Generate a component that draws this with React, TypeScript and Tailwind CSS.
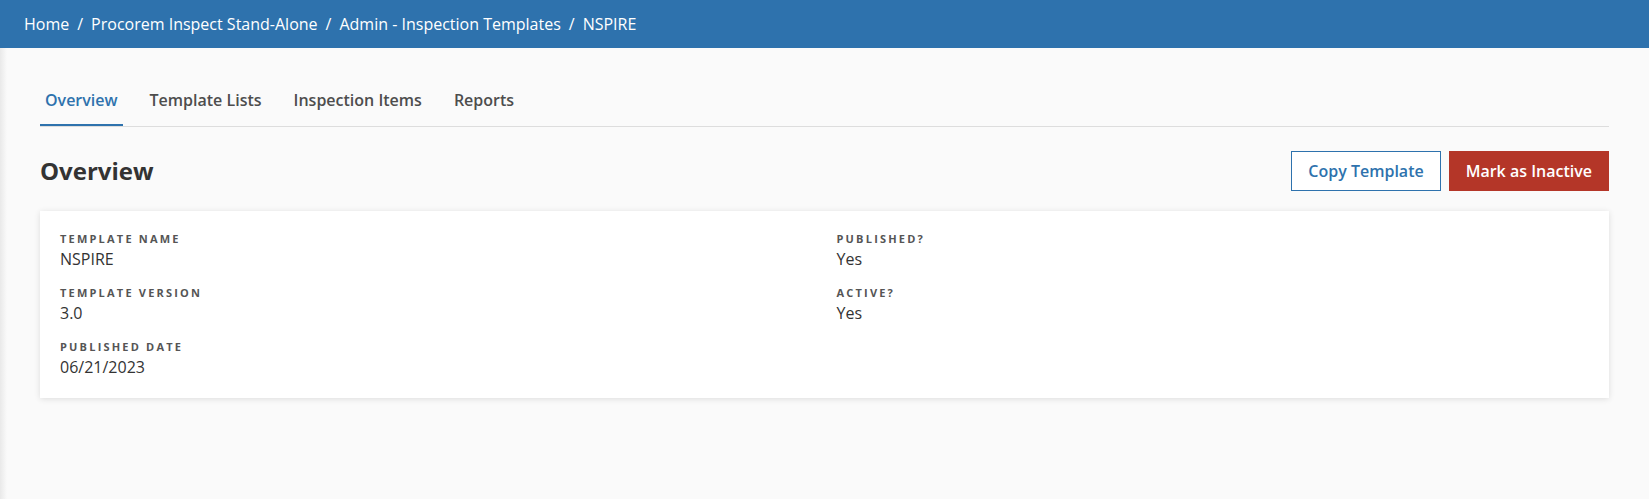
import React from "react";

const CRUMBS = ["Home", "Procorem Inspect Stand-Alone", "Admin - Inspection Templates", "NSPIRE"];
const TABS = ["Overview", "Template Lists", "Inspection Items", "Reports"];

const LEFT_FIELDS = [
  { label: "Template Name", value: "NSPIRE" },
  { label: "Template Version", value: "3.0" },
  { label: "Published Date", value: "06/21/2023" },
];

const RIGHT_FIELDS = [
  { label: "Published?", value: "Yes" },
  { label: "Active?", value: "Yes" },
];

function Field({ label, value }: { label: string; value: string }) {
  return (
    <div>
      <div className="text-[11px] font-bold uppercase leading-4 tracking-[0.2em] text-[#555]">{label}</div>
      <div className="text-base leading-6 text-[#333]">{value}</div>
    </div>
  );
}

export default function App() {
  return (
    <div className="flex h-screen w-full font-['Open_Sans',sans-serif]">
      <div className="flex flex-1 flex-col bg-[#fafafa]">
        <header className="flex h-12 items-center bg-[#2e72ad] px-6 text-base text-white">
          {CRUMBS.map((c, i) => (
            <React.Fragment key={c}>
              {i > 0 && <span className="px-2">/</span>}
              <span>{c}</span>
            </React.Fragment>
          ))}
        </header>

        <main className="flex-1 bg-[linear-gradient(to_right,#e9e9e9,#fafafa_7px)] px-10 pt-10">
          <nav className="flex gap-[22px] border-b border-[#dddddd]">
            {TABS.map((t, i) => (
              <a
                key={t}
                href="#"
                className={
                  i === 0
                    ? "border-b-2 border-[#2e72ad] px-[5px] pb-3 text-base font-semibold leading-6 text-[#2e72ad]"
                    : "border-b-2 border-transparent px-[5px] pb-3 text-base font-semibold leading-6 text-[#4d4d4d]"
                }
              >
                {t}
              </a>
            ))}
          </nav>

          <div className="mt-6 flex items-center justify-between">
            <h1 className="text-2xl font-bold leading-8 text-[#333]">Overview</h1>
            <div className="flex gap-2">
              <button className="border border-[#2e72ad] bg-white px-4 py-[7px] text-base font-semibold leading-6 text-[#2e72ad]">
                Copy Template
              </button>
              <button className="border border-[#b43628] bg-[#b43628] px-4 py-[7px] text-base font-semibold leading-6 text-white">
                Mark as Inactive
              </button>
            </div>
          </div>

          <div className="mt-5 grid grid-cols-2 gap-x-6 bg-white px-5 pb-[19px] pt-5 shadow-[0_1px_6px_rgba(0,0,0,0.12)]">
            <div className="flex flex-col gap-y-[14px]">
              {LEFT_FIELDS.map((f) => (
                <Field key={f.label} {...f} />
              ))}
            </div>
            <div className="flex flex-col gap-y-[14px]">
              {RIGHT_FIELDS.map((f) => (
                <Field key={f.label} {...f} />
              ))}
            </div>
          </div>
        </main>
      </div>
      <div className="w-[3px] bg-white" />
    </div>
  );
}
